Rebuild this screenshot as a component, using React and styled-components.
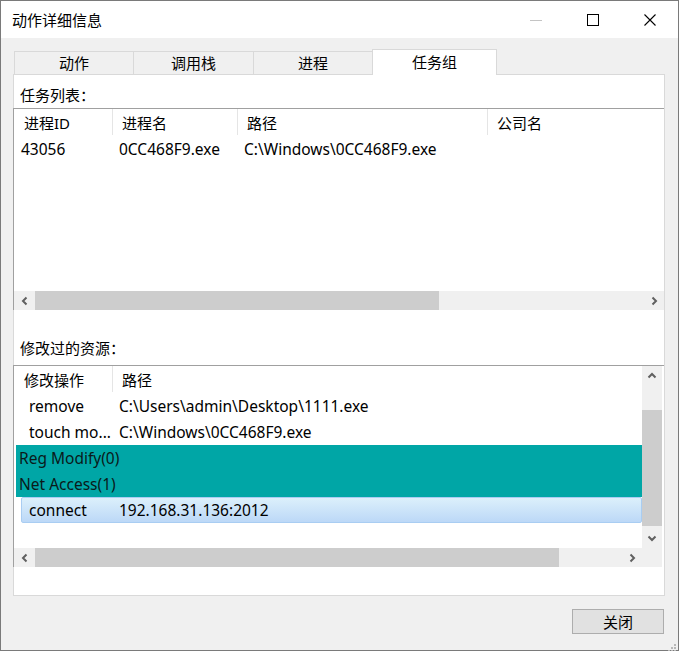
import React from 'react';
import styled, { createGlobalStyle } from 'styled-components';

const GlobalStyle = createGlobalStyle`
  html, body { margin: 0; padding: 0; background: #ffffff; }
  body {
    font-family: "Noto Sans", "Noto Sans CJK SC", sans-serif;
    font-size: 15px;
    color: #000;
  }
  * { box-sizing: border-box; }
`;

const Window = styled.div`
  width: 679px;
  height: 651px;
  border: 1px solid #7a7a7a;
  background: #f0f0f0;
  display: flex;
  flex-direction: column;
  position: relative;
`;

const TitleBar = styled.div`
  height: 37px;
  flex-shrink: 0;
  background: #ffffff;
  display: flex;
  align-items: center;
`;

const Title = styled.div`
  flex: 1;
  padding-left: 11px;
  line-height: 20px;
  color: #000;
`;

const CtrlBtn = styled.div`
  width: 57px;
  height: 37px;
  display: flex;
  align-items: center;
  justify-content: center;
`;

const Body = styled.div`
  flex: 1;
  display: flex;
  flex-direction: column;
  padding: 11px 13px 0 12px;
`;

const TabRow = styled.div`
  height: 25px;
  display: flex;
  align-items: flex-end;
  padding-left: 1px;
`;

const Tab = styled.div`
  width: ${(p) => p.$w}px;
  height: ${(p) => (p.$active ? 26 : 23)}px;
  margin-right: -1px;
  margin-bottom: ${(p) => (p.$active ? -1 : 0)}px;
  border: 1px solid #d9d9d9;
  border-bottom: none;
  background: ${(p) => (p.$active ? '#ffffff' : '#f0f0f0')};
  display: flex;
  align-items: center;
  justify-content: center;
  line-height: 20px;
  position: ${(p) => (p.$active ? 'relative' : 'static')};
  z-index: ${(p) => (p.$active ? 1 : 'auto')};
  padding-bottom: ${(p) => (p.$active ? 1 : 0)}px;
`;

const Panel = styled.div`
  height: 522px;
  flex-shrink: 0;
  background: #ffffff;
  border: 1px solid #d9d9d9;
  display: flex;
  flex-direction: column;
`;

const SectionLabel = styled.div`
  padding: ${(p) => p.$top}px 0 ${(p) => p.$bottom}px 6px;
  line-height: 22px;
`;

const ListBox = styled.div`
  margin-left: -1px;
  height: 202px;
  border-top: 1px solid #a0a0a0;
  border-left: 1px solid #a0a0a0;
  display: grid;
  grid-template-columns: ${(p) => (p.$vscroll ? '1fr 20px' : '1fr')};
  grid-template-rows: 1fr 19px;
  padding-right: ${(p) => (p.$vscroll ? 2 : 0)}px;
  overflow: hidden;
`;

const ListContent = styled.div`
  overflow: hidden;
  min-width: 0;
`;

const HeaderRow = styled.div`
  display: grid;
  grid-template-columns: ${(p) => p.$cols};
  height: 27px;
`;

const HeaderCell = styled.div`
  padding: 1px 0 0 ${(p) => (p.$first ? 10 : 9)}px;
  line-height: 26px;
  border-right: ${(p) => (p.$divider ? '1px solid #e5e5e5' : 'none')};
  height: 26px;
  white-space: nowrap;
  overflow: hidden;
`;

const DataRow = styled.div`
  display: grid;
  grid-template-columns: ${(p) => p.$cols};
  height: 26px;
  line-height: 26px;
  font-size: 15.5px;
`;

const DataCell = styled.div`
  padding-left: ${(p) => p.$pad}px;
  white-space: nowrap;
  overflow: hidden;
`;

const ChildRow = styled.div`
  margin-left: 7px;
  display: grid;
  grid-template-columns: 92px 1fr;
  height: 26px;
  line-height: 24px;
  font-size: 15.5px;
  border: 1px solid ${(p) => (p.$selected ? '#a9cdf2' : 'transparent')};
  border-radius: 2px;
  background: ${(p) =>
    p.$selected ? 'linear-gradient(#dcf0fb, #bcd8f7)' : 'transparent'};
`;

const ChildCell = styled.div`
  padding-left: ${(p) => p.$pad}px;
  white-space: nowrap;
  overflow: hidden;
`;

const GroupRow = styled.div`
  margin-left: 2px;
  height: 26px;
  line-height: 26px;
  font-size: 15.5px;
  padding-left: 3px;
  background: #00a6a6;
  color: #0a1a1a;
`;

const HScroll = styled.div`
  grid-column: 1;
  display: flex;
  background: #f0f0f0;
  height: 19px;
`;

const ArrowBox = styled.div`
  width: ${(p) => p.$w || 21}px;
  height: ${(p) => p.$h || 19}px;
  flex-shrink: 0;
  display: flex;
  align-items: center;
  justify-content: center;
`;

const HThumb = styled.div`
  width: ${(p) => p.$w}px;
  height: 19px;
  background: #cdcdcd;
`;

const Track = styled.div`
  flex: 1;
`;

const VScroll = styled.div`
  grid-column: 2;
  grid-row: 1;
  display: flex;
  flex-direction: column;
  background: #f0f0f0;
`;

const VGap = styled.div`
  height: ${(p) => p.$h}px;
  flex-shrink: 0;
`;

const VThumb = styled.div`
  height: ${(p) => p.$h}px;
  background: #cdcdcd;
`;

const Corner = styled.div`
  grid-column: 2;
  grid-row: 2;
  background: #f0f0f0;
`;

const Footer = styled.div`
  display: flex;
  justify-content: flex-end;
  padding-top: 13px;
  padding-right: 1px;
`;

const Button = styled.div`
  width: 92px;
  height: 25px;
  background: #e1e1e1;
  border: 1px solid #adadad;
  display: flex;
  align-items: center;
  justify-content: center;
  line-height: 20px;
`;

const Grip = styled.div`
  position: absolute;
  right: 1px;
  bottom: 1px;
  width: 12px;
  height: 12px;
`;

const Chevron = ({ dir }) => {
  const pts = {
    left: '6.5,1.5 3,5 6.5,8.5',
    right: '3.5,1.5 7,5 3.5,8.5',
    up: '1.5,6.5 5,3 8.5,6.5',
    down: '1.5,3.5 5,7 8.5,3.5',
  }[dir];
  return (
    <svg width="10" height="10" viewBox="0 0 10 10">
      <polyline points={pts} fill="none" stroke="#606060" strokeWidth="2" />
    </svg>
  );
};

const cols1 = '99px 125px 250px 1fr';

export default function App() {
  return (
    <>
      <GlobalStyle />
      <Window>
        <TitleBar>
          <Title>动作详细信息</Title>
          <CtrlBtn>
            <svg width="12" height="12" viewBox="0 0 12 12">
              <line x1="0" y1="6.5" x2="12" y2="6.5" stroke="#c4c4c4" strokeWidth="1" />
            </svg>
          </CtrlBtn>
          <CtrlBtn>
            <svg width="12" height="12" viewBox="0 0 12 12">
              <rect x="0.5" y="0.5" width="11" height="11" fill="none" stroke="#000" strokeWidth="1" />
            </svg>
          </CtrlBtn>
          <CtrlBtn>
            <svg width="12" height="12" viewBox="0 0 12 12">
              <path d="M0.5 0.5 L11.5 11.5 M11.5 0.5 L0.5 11.5" stroke="#000" strokeWidth="1.1" />
            </svg>
          </CtrlBtn>
        </TitleBar>
        <Body>
          <TabRow>
            <Tab $w={120}>动作</Tab>
            <Tab $w={121}>调用栈</Tab>
            <Tab $w={120}>进程</Tab>
            <Tab $w={125} $active>任务组</Tab>
          </TabRow>
          <Panel>
            <SectionLabel $top={9} $bottom={2}>任务列表：</SectionLabel>
            <ListBox>
              <ListContent>
                <HeaderRow $cols={cols1}>
                  <HeaderCell $first $divider>进程ID</HeaderCell>
                  <HeaderCell $divider>进程名</HeaderCell>
                  <HeaderCell $divider>路径</HeaderCell>
                  <HeaderCell>公司名</HeaderCell>
                </HeaderRow>
                <DataRow $cols={cols1}>
                  <DataCell $pad={7}>43056</DataCell>
                  <DataCell $pad={6}>0CC468F9.exe</DataCell>
                  <DataCell $pad={6}>C:\Windows\0CC468F9.exe</DataCell>
                  <DataCell $pad={6}></DataCell>
                </DataRow>
              </ListContent>
              <HScroll>
                <ArrowBox><Chevron dir="left" /></ArrowBox>
                <HThumb $w={404} />
                <Track />
                <ArrowBox><Chevron dir="right" /></ArrowBox>
              </HScroll>
            </ListBox>
            <SectionLabel $top={27} $bottom={6}>修改过的资源：</SectionLabel>
            <ListBox $vscroll>
              <ListContent>
                <HeaderRow $cols="99px 1fr">
                  <HeaderCell $first $divider>修改操作</HeaderCell>
                  <HeaderCell>路径</HeaderCell>
                </HeaderRow>
                <ChildRow>
                  <ChildCell $pad={7}>remove</ChildCell>
                  <ChildCell $pad={5}>C:\Users\admin\Desktop\1111.exe</ChildCell>
                </ChildRow>
                <ChildRow>
                  <ChildCell $pad={7}>touch mo...</ChildCell>
                  <ChildCell $pad={5}>C:\Windows\0CC468F9.exe</ChildCell>
                </ChildRow>
                <GroupRow>Reg Modify(0)</GroupRow>
                <GroupRow>Net Access(1)</GroupRow>
                <ChildRow $selected>
                  <ChildCell $pad={7}>connect</ChildCell>
                  <ChildCell $pad={5}>192.168.31.136:2012</ChildCell>
                </ChildRow>
              </ListContent>
              <VScroll>
                <ArrowBox $w={20} $h={20}><Chevron dir="up" /></ArrowBox>
                <VGap $h={24} />
                <VThumb $h={116} />
                <Track />
                <ArrowBox $w={20} $h={20}><Chevron dir="down" /></ArrowBox>
              </VScroll>
              <HScroll>
                <ArrowBox><Chevron dir="left" /></ArrowBox>
                <HThumb $w={524} />
                <Track />
                <ArrowBox><Chevron dir="right" /></ArrowBox>
              </HScroll>
              <Corner />
            </ListBox>
          </Panel>
          <Footer>
            <Button>关闭</Button>
          </Footer>
        </Body>
        <Grip>
          <svg width="12" height="12" viewBox="0 0 12 12">
            {[[9, 3], [9, 6], [6, 6], [9, 9], [6, 9], [3, 9]].map(([x, y]) => (
              <rect key={`${x}-${y}`} x={x} y={y} width="2" height="2" fill="#b8b8b8" />
            ))}
          </svg>
        </Grip>
      </Window>
    </>
  );
}
